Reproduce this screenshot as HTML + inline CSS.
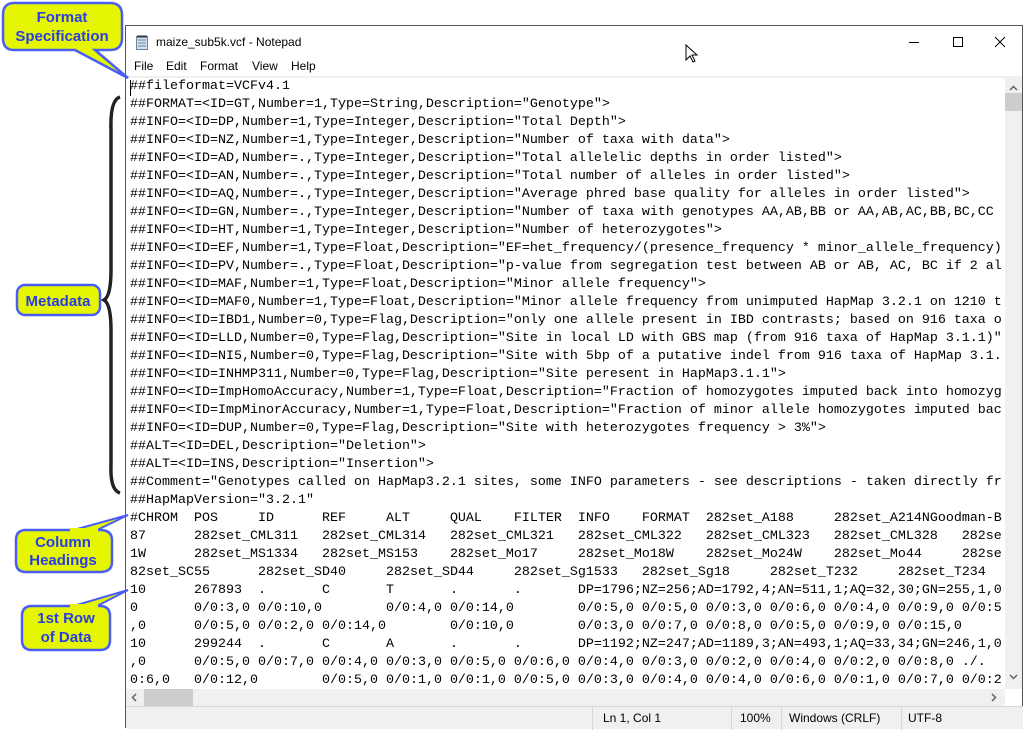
<!DOCTYPE html>
<html><head><meta charset="utf-8"><style>
*{margin:0;padding:0;box-sizing:border-box}
body{width:1023px;height:728px;background:#fff;position:relative;overflow:hidden;font-family:"Liberation Sans",sans-serif}
#win{position:absolute;left:125px;top:25px;width:898px;height:703px;border:1px solid #555;border-bottom:none;background:#fff}
#title{position:absolute;left:30px;top:9px;font-size:12px;color:#000}
#menu{position:absolute;left:0;top:31px;font-size:12px}
#menu span{position:absolute;top:2px}
#text{position:absolute;left:4px;top:52px;width:875px;height:611px;overflow:hidden}
pre{font-family:"Liberation Mono",monospace;font-size:13.33px;line-height:18px;tab-size:8;-moz-tab-size:8;color:#000;white-space:pre}
#vs{position:absolute;left:879px;top:50px;width:17px;height:613px;background:#f0f0f0}
#hs{position:absolute;left:0;top:663px;width:879px;height:17px;background:#f0f0f0}
#status{position:absolute;left:0;top:680px;width:897px;height:23px;background:#f0f0f0;border-top:1px solid #d7d7d7;font-size:12px}
#status span{position:absolute;top:4px}
.sep{position:absolute;top:0;width:1px;height:23px;background:#d7d7d7}
</style></head><body>
<div id="win">
 <svg style="position:absolute;left:9px;top:8px" width="14" height="16"><rect x="1.5" y="2.5" width="11" height="13" fill="#cfe0ee" stroke="#6a86a0"/><path d="M3 6h8M3 9h8M3 12h8" stroke="#6a86a0"/><path d="M2 2.5h10" stroke="#334" stroke-width="2"/></svg>
 <div id="title">maize_sub5k.vcf - Notepad</div>
 <svg style="position:absolute;left:780px;top:8px" width="110" height="16"><path d="M3 8.5h10" stroke="#000"/><rect x="47.5" y="3.5" width="9" height="9" fill="none" stroke="#000"/><path d="M89 3l10 10M99 3l-10 10" stroke="#000"/></svg>
 <svg style="position:absolute;left:559px;top:18px" width="14" height="20"><path d="M1 1v15l4-4 3 6 2-1-3-6h5z" fill="#fff" stroke="#000"/></svg>
 <div id="menu"><span style="left:8px">File</span><span style="left:40px">Edit</span><span style="left:74px">Format</span><span style="left:126px">View</span><span style="left:165px">Help</span></div>
 <div style="position:absolute;left:0;top:50px;width:879px;height:2px;background:#f0f0f0"></div>
 <div style="position:absolute;left:4px;top:54px;width:1px;height:16px;background:#000"></div>
 <div id="text"><pre>##fileformat=VCFv4.1
##FORMAT=&lt;ID=GT,Number=1,Type=String,Description="Genotype"&gt;
##INFO=&lt;ID=DP,Number=1,Type=Integer,Description="Total Depth"&gt;
##INFO=&lt;ID=NZ,Number=1,Type=Integer,Description="Number of taxa with data"&gt;
##INFO=&lt;ID=AD,Number=.,Type=Integer,Description="Total allelelic depths in order listed"&gt;
##INFO=&lt;ID=AN,Number=.,Type=Integer,Description="Total number of alleles in order listed"&gt;
##INFO=&lt;ID=AQ,Number=.,Type=Integer,Description="Average phred base quality for alleles in order listed"&gt;
##INFO=&lt;ID=GN,Number=.,Type=Integer,Description="Number of taxa with genotypes AA,AB,BB or AA,AB,AC,BB,BC,CC
##INFO=&lt;ID=HT,Number=1,Type=Integer,Description="Number of heterozygotes"&gt;
##INFO=&lt;ID=EF,Number=1,Type=Float,Description="EF=het_frequency/(presence_frequency * minor_allele_frequency)
##INFO=&lt;ID=PV,Number=.,Type=Float,Description="p-value from segregation test between AB or AB, AC, BC if 2 al
##INFO=&lt;ID=MAF,Number=1,Type=Float,Description="Minor allele frequency"&gt;
##INFO=&lt;ID=MAF0,Number=1,Type=Float,Description="Minor allele frequency from unimputed HapMap 3.2.1 on 1210 t
##INFO=&lt;ID=IBD1,Number=0,Type=Flag,Description="only one allele present in IBD contrasts; based on 916 taxa o
##INFO=&lt;ID=LLD,Number=0,Type=Flag,Description="Site in local LD with GBS map (from 916 taxa of HapMap 3.1.1)"
##INFO=&lt;ID=NI5,Number=0,Type=Flag,Description="Site with 5bp of a putative indel from 916 taxa of HapMap 3.1.
##INFO=&lt;ID=INHMP311,Number=0,Type=Flag,Description="Site peresent in HapMap3.1.1"&gt;
##INFO=&lt;ID=ImpHomoAccuracy,Number=1,Type=Float,Description="Fraction of homozygotes imputed back into homozyg
##INFO=&lt;ID=ImpMinorAccuracy,Number=1,Type=Float,Description="Fraction of minor allele homozygotes imputed bac
##INFO=&lt;ID=DUP,Number=0,Type=Flag,Description="Site with heterozygotes frequency &gt; 3%"&gt;
##ALT=&lt;ID=DEL,Description="Deletion"&gt;
##ALT=&lt;ID=INS,Description="Insertion"&gt;
##Comment="Genotypes called on HapMap3.2.1 sites, some INFO parameters - see descriptions - taken directly fr
##HapMapVersion="3.2.1"
#CHROM	POS	ID	REF	ALT	QUAL	FILTER	INFO	FORMAT	282set_A188	282set_A214NGoodman-B
87	282set_CML311	282set_CML314	282set_CML321	282set_CML322	282set_CML323	282set_CML328	282se
1W	282set_MS1334	282set_MS153	282set_Mo17	282set_Mo18W	282set_Mo24W	282set_Mo44	282se
82set_SC55	282set_SD40	282set_SD44	282set_Sg1533	282set_Sg18	282set_T232	282set_T234
10	267893	.	C	T	.	.	DP=1796;NZ=256;AD=1792,4;AN=511,1;AQ=32,30;GN=255,1,0
0	0/0:3,0	0/0:10,0	0/0:4,0	0/0:14,0	0/0:5,0	0/0:5,0	0/0:3,0	0/0:6,0	0/0:4,0	0/0:9,0	0/0:5
,0	0/0:5,0	0/0:2,0	0/0:14,0	0/0:10,0	0/0:3,0	0/0:7,0	0/0:8,0	0/0:5,0	0/0:9,0	0/0:15,0
10	299244	.	C	A	.	.	DP=1192;NZ=247;AD=1189,3;AN=493,1;AQ=33,34;GN=246,1,0
,0	0/0:5,0	0/0:7,0	0/0:4,0	0/0:3,0	0/0:5,0	0/0:6,0	0/0:4,0	0/0:3,0	0/0:2,0	0/0:4,0	0/0:2,0	0/0:8,0	./.
0:6,0	0/0:12,0	0/0:5,0	0/0:1,0	0/0:1,0	0/0:5,0	0/0:3,0	0/0:4,0	0/0:4,0	0/0:6,0	0/0:1,0	0/0:7,0	0/0:2</pre></div>
 <div id="vs"><svg width="17" height="613"><path d="M5 14l3.5-3.5 3.5 3.5" fill="none" stroke="#606060" stroke-width="1.5"/><rect x="0" y="17" width="17" height="18" fill="#cdcdcd"/><path d="M5 599l3.5 3.5 3.5-3.5" fill="none" stroke="#606060" stroke-width="1.5"/></svg></div>
 <div id="hs"><svg width="879" height="17"><path d="M10 5l-3.5 3.5 3.5 3.5" fill="none" stroke="#606060" stroke-width="1.5"/><rect x="18" y="0" width="49" height="17" fill="#cdcdcd"/><path d="M866 5l3.5 3.5-3.5 3.5" fill="none" stroke="#606060" stroke-width="1.5"/></svg></div>
 <div id="status">
  <div class="sep" style="left:466px"></div><span style="left:477px">Ln 1, Col 1</span>
  <div class="sep" style="left:605px"></div><span style="left:614px">100%</span>
  <div class="sep" style="left:655px"></div><span style="left:663px">Windows (CRLF)</span>
  <div class="sep" style="left:775px"></div><span style="left:782px">UTF-8</span>
 </div>
</div>
<svg style="position:absolute;left:0;top:0" width="130" height="728" font-family="Liberation Sans,sans-serif" font-weight="bold" fill="#2a3ee0">
 <path d="M14 3H110Q122 3 122 15V38Q122 50 110 50H95L128 78L75 50H14Q3 50 3 38V15Q3 3 14 3Z" fill="#e6f500" stroke="#4a5ef5" stroke-width="2.5"/>
 <text x="62" y="22" font-size="15" text-anchor="middle" fill="#2a3ee0">Format</text>
 <text x="62" y="41" font-size="15" text-anchor="middle" fill="#2a3ee0">Specification</text>
 <path d="M120 97Q110 100 111 130V270Q111 296 104 300Q111 304 111 330V465Q110 490 120 493" fill="none" stroke="#222" stroke-width="3.5"/>
 <rect x="17" y="285" width="83" height="30" rx="8" fill="#e6f500" stroke="#4a5ef5" stroke-width="2.5"/>
 <text x="58" y="306" font-size="15" text-anchor="middle" fill="#2a3ee0">Metadata</text>
 <path d="M26 530H100Q112 530 112 540V562Q112 572 100 572H26Q16 572 16 562V540Q16 530 26 530Z" fill="#e6f500" stroke="#4a5ef5" stroke-width="2.5"/>
 <path d="M70 531L128 515L95 531" fill="#e6f500" stroke="#4a5ef5" stroke-width="2"/>
 <rect x="70" y="528" width="28" height="6" fill="#e6f500"/>
 <text x="63" y="547" font-size="15" text-anchor="middle" fill="#2a3ee0">Column</text>
 <text x="63" y="565" font-size="15" text-anchor="middle" fill="#2a3ee0">Headings</text>
 <path d="M32 606H100Q110 606 110 616V640Q110 650 100 650H32Q22 650 22 640V616Q22 606 32 606Z" fill="#e6f500" stroke="#4a5ef5" stroke-width="2.5"/>
 <path d="M70 607L128 590L95 607" fill="#e6f500" stroke="#4a5ef5" stroke-width="2"/>
 <rect x="70" y="604" width="28" height="6" fill="#e6f500"/>
 <text x="66" y="623" font-size="15" text-anchor="middle" fill="#2a3ee0">1st Row</text>
 <text x="66" y="642" font-size="15" text-anchor="middle" fill="#2a3ee0">of Data</text>
</svg>
</body></html>
